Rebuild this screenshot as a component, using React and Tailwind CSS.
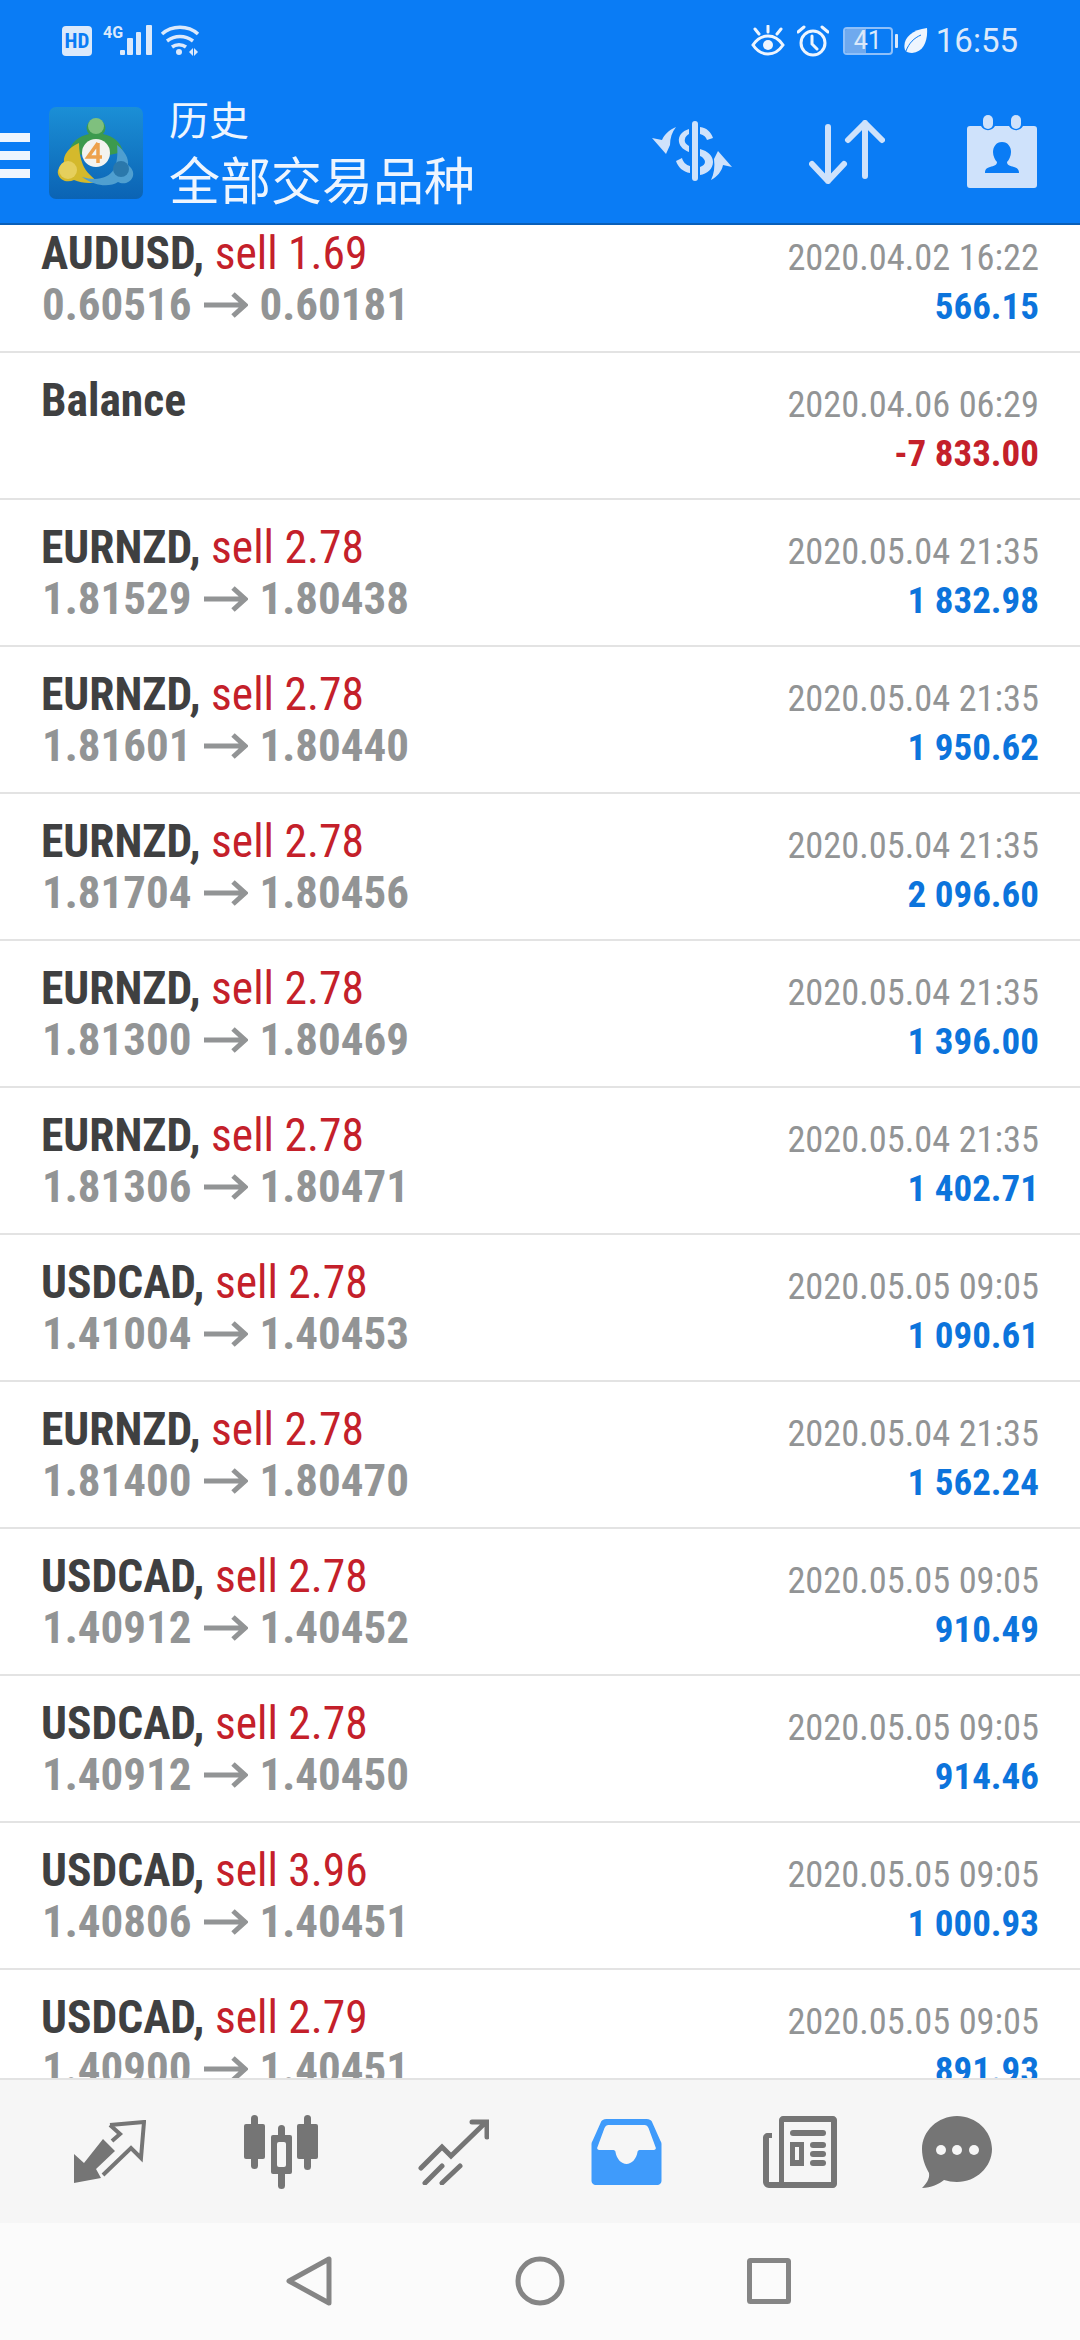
const rows = [
  { sym: "AUDUSD", lots: "sell 1.69", from: "0.60516", to: "0.60181", date: "2020.04.02 16:22", profit: "566.15" },
  { sym: "Balance", date: "2020.04.06 06:29", profit: "-7 833.00", loss: true },
  { sym: "EURNZD", lots: "sell 2.78", from: "1.81529", to: "1.80438", date: "2020.05.04 21:35", profit: "1 832.98" },
  { sym: "EURNZD", lots: "sell 2.78", from: "1.81601", to: "1.80440", date: "2020.05.04 21:35", profit: "1 950.62" },
  { sym: "EURNZD", lots: "sell 2.78", from: "1.81704", to: "1.80456", date: "2020.05.04 21:35", profit: "2 096.60" },
  { sym: "EURNZD", lots: "sell 2.78", from: "1.81300", to: "1.80469", date: "2020.05.04 21:35", profit: "1 396.00" },
  { sym: "EURNZD", lots: "sell 2.78", from: "1.81306", to: "1.80471", date: "2020.05.04 21:35", profit: "1 402.71" },
  { sym: "USDCAD", lots: "sell 2.78", from: "1.41004", to: "1.40453", date: "2020.05.05 09:05", profit: "1 090.61" },
  { sym: "EURNZD", lots: "sell 2.78", from: "1.81400", to: "1.80470", date: "2020.05.04 21:35", profit: "1 562.24" },
  { sym: "USDCAD", lots: "sell 2.78", from: "1.40912", to: "1.40452", date: "2020.05.05 09:05", profit: "910.49" },
  { sym: "USDCAD", lots: "sell 2.78", from: "1.40912", to: "1.40450", date: "2020.05.05 09:05", profit: "914.46" },
  { sym: "USDCAD", lots: "sell 3.96", from: "1.40806", to: "1.40451", date: "2020.05.05 09:05", profit: "1 000.93" },
  { sym: "USDCAD", lots: "sell 2.79", from: "1.40900", to: "1.40451", date: "2020.05.05 09:05", profit: "891.93" },
];

const Row = ({ row }) => (
  <div className="h-[147px] shrink-0 flex justify-between border-b-2 border-[#e3e3e3] pl-[41px] pr-[41px] font-[Roboto,sans-serif] [font-stretch:75%]">
    <div>
      <div className="h-[52px] mt-[22px] text-[45.5px] leading-[52px] whitespace-nowrap text-[#3f4041] font-bold">
        {row.sym}
        {row.lots && <span>, </span>}
        {row.lots && <span className="font-normal text-[#c4202a]">{row.lots}</span>}
      </div>
      {row.from && (
        <div className="flex items-center h-[50px] pl-[1px] text-[45px] leading-[50px] font-bold text-[#929495]">
          <span>{row.from}</span>
          <svg width="44" height="26" viewBox="0 0 44 26" className="mx-[12px]" fill="none" stroke="#929495" strokeWidth="5">
            <path d="M0 13h41M29 2l12 11-12 11" />
          </svg>
          <span>{row.to}</span>
        </div>
      )}
    </div>
    <div className="flex flex-col items-end">
      <div className="mt-[33px] h-[38px] text-[36.4px] leading-[38px] text-[#929495]">{row.date}</div>
      <div className={`mt-[11px] h-[38px] text-[37px] leading-[38px] font-bold ${row.loss ? "text-[#c4202a]" : "text-[#0c74dc]"}`}>
        {row.profit}
      </div>
    </div>
  </div>
);

const Logo = () => (
  <svg width="94" height="92" viewBox="0 0 94 92" className="shrink-0">
    <defs>
      <linearGradient id="lg" x1="0" y1="0" x2="0" y2="1">
        <stop offset="0" stopColor="#1b8fd6" />
        <stop offset="1" stopColor="#0b63b4" />
      </linearGradient>
    </defs>
    <rect width="94" height="92" rx="7" fill="url(#lg)" />
    <path d="M47 12a9 9 0 0 1 7 15c10 2 18 8 20 18l-27 6-27-6c2-10 10-16 20-18a9 9 0 0 1 7-15z" fill="#3c9a4e" />
    <circle cx="47" cy="19" r="8" fill="#7fc07e" />
    <path d="M30 36c-10 4-16 12-15 19-4 3-7 8-6 12 2 7 10 9 16 6 7 3 16 4 24 2-6-5-12-10-15-17-3-7-4-15-4-22z" fill="#d4b92c" />
    <circle cx="19" cy="63" r="9" fill="#e6cf5c" />
    <path d="M68 38c8 6 12 14 11 20 4 3 6 7 5 11-2 7-10 9-15 6-8 5-22 5-36-5 14 4 26 2 32-8 3-6 4-15 3-24z" fill="#4f9fd0" />
    <circle cx="72" cy="62" r="8" fill="#2b78ab" />
    <circle cx="47" cy="46" r="14" fill="#f3f3f0" />
    <path d="M49 36l-10 14h14M49 36v20" fill="none" stroke="#eda14c" strokeWidth="3.5" />
  </svg>
);

const Exchange = () => (
  <svg width="80" height="61" viewBox="0 0 80 61" fill="#cfe2fb">
    <rect x="40" y="0" width="6" height="60" rx="3" />
    <path d="M48 6c7 1 11 5 13 11l-6 2c-1-3-3-5-7-6z" />
    <path d="M37 8c-7 2-11 7-10 13 1 5 5 8 10 10v-6c-3-2-5-4-4-7 0-2 2-4 4-5z" />
    <path d="M24 40l6-3c1 4 4 7 8 8v7c-7-1-12-6-14-12z" />
    <path fillRule="evenodd" d="M48 28c8 2 13 7 13 13 0 7-6 12-13 13zm0 7v11c3-1 5-3 5-5s-2-5-5-6z" />
    <path d="M24 6C17 9 12 14 10 19L0 17 14 33 18 24C18 17 20 11 24 6z" />
    <path d="M59 59C65 56 70 50 71 44L80 46 66 30 62 38C63 46 62 53 59 59z" />
  </svg>
);

const SortArrows = () => (
  <svg width="76" height="64" viewBox="0 0 76 64" fill="none" stroke="#cfe2fb" strokeWidth="6" strokeLinecap="round" strokeLinejoin="round">
    <path d="M19 7v54M3 44l16 17 16-17M56 3v53M39 20L56 3l17 17" />
  </svg>
);

const Contact = () => (
  <svg width="70" height="73" viewBox="0 0 70 73" fill="#cfe2fb">
    <path d="M3 11h11a8 8 0 0 0 14 0h14a8 8 0 0 0 14 0h11a3 3 0 0 1 3 3v56a3 3 0 0 1-3 3H3a3 3 0 0 1-3-3V14a3 3 0 0 1 3-3z" />
    <rect x="16" y="0" width="10" height="14" rx="5" />
    <rect x="44" y="0" width="10" height="14" rx="5" />
    <path fill="#0a7cf5" d="M35 27c6 0 9 5 9 10 0 4-2 8-4 10 0 3 3 4 7 5 4 1 5 3 5 6H18c0-3 1-5 5-6 4-1 7-2 7-5-2-2-4-6-4-10 0-5 3-10 9-10z" />
  </svg>
);

const StatusLeft = () => (
  <div className="flex items-start">
    <div className="mt-[1px] w-[30px] h-[30px] rounded-[4px] bg-[#dbe9fb] text-[#0a7cf5] text-[21px] font-bold leading-[30px] text-center font-[Roboto,sans-serif] [font-stretch:75%]">HD</div>
    <svg width="100" height="32" viewBox="0 0 100 32" className="ml-[11px]" fill="#dbe9fb">
      <text x="0" y="13" fontSize="16" fontWeight="700" fontFamily="Roboto, sans-serif">4G</text>
      <rect x="17" y="25" width="5" height="5" rx="1" />
      <rect x="24" y="13" width="6" height="17" rx="1" />
      <rect x="33" y="7" width="5" height="23" rx="1" />
      <rect x="43" y="0" width="6" height="30" rx="1" />
      <g fill="none" stroke="#dbe9fb" strokeWidth="3.5">
        <path d="M59 9c10-9 26-9 36 0M64 16c8-6 18-6 26 0M69 22c4-3 10-3 14 0" />
      </g>
      <circle cx="76" cy="27" r="3" />
      <path d="M86 27l4-4v8zM91 23l4 4-4 4z" />
    </svg>
  </div>
);

const StatusRight = () => (
  <div className="flex items-center font-[Roboto,sans-serif] text-[#dbe9fb]">
    <svg width="34" height="32" viewBox="0 0 34 32" fill="none" stroke="#eef5fe" strokeWidth="3" strokeLinecap="round">
      <path d="M2 20c8-12 22-12 30 0-8 12-22 12-30 0zM17 1v6M4 4l4 5M30 4l-4 5" />
      <circle cx="17" cy="20" r="5" fill="#eef5fe" stroke="none" />
    </svg>
    <svg width="32" height="32" viewBox="0 0 32 32" className="ml-[12px]" fill="none" stroke="#eef5fe" strokeWidth="3" strokeLinecap="round">
      <circle cx="16" cy="18" r="12" />
      <path d="M15 11v8l5 5M1 7l6-5M31 7l-6-5" />
    </svg>
    <div className="ml-[14px] relative w-[50px] h-[28px] border-2 border-[#8fc0f9] rounded-[4px] overflow-hidden text-[25px] leading-[24px] text-center">
      <div className="absolute left-0 top-0 bottom-0 w-[21px] bg-[#6fa9ee]" />
      <span className="relative">41</span>
    </div>
    <div className="ml-[2px] w-[3px] h-[14px] bg-[#dbe9fb] rounded-[1px]" />
    <svg width="24" height="26" viewBox="0 0 24 26" className="ml-[6px]" fill="#eef5fe">
      <path d="M23 0c1 12-3 24-15 25-3 0-6-1-7-3C-2 12 6 2 23 0z" />
      <path d="M2 23C5 15 10 10 17 7" fill="none" stroke="#0a7cf5" strokeWidth="1" />
    </svg>
    <div className="ml-[8px] text-[33px] leading-[32px]">16:55</div>
  </div>
);

const BottomIcons = () => (
  <div className="h-[145px] bg-[#f6f6f6] border-t-2 border-[#e3e3e3] shrink-0 flex items-center pl-[74px]">
    <svg width="72" height="64" viewBox="0 0 72 64" fill="#757575">
      <path d="M0 63V34l10 9 19-24 12 12-19 18 5 9z" />
      <path fill="none" stroke="#757575" strokeWidth="4" d="M36 5l34-3-3 36-10-10-28 27M36 5l10 9-8 7" />
    </svg>
    <svg width="74" height="74" viewBox="0 0 74 74" className="ml-[98px]" fill="#757575">
      <rect x="7" y="0" width="7" height="54" rx="3.5" />
      <rect x="0" y="9" width="21" height="35" rx="2" />
      <rect x="60" y="0" width="7" height="55" rx="3.5" />
      <rect x="53" y="9" width="21" height="35" rx="2" />
      <rect x="34" y="10" width="7" height="64" rx="3.5" />
      <rect x="27" y="20" width="21" height="39" rx="2" />
      <rect x="33" y="27" width="9" height="25" rx="2" fill="#f6f6f6" />
    </svg>
    <svg width="71" height="66" viewBox="0 0 71 66" className="ml-[100px]" fill="none" stroke="#757575" strokeWidth="5" strokeLinecap="round">
      <path d="M3 49l21-21 9 9 34-33M54 3h15v15M7 64l17-17M24 64l18-17" />
    </svg>
    <svg width="71" height="66" viewBox="0 0 70 66" className="ml-[102px]" fill="#3f9bfb">
      <path fillRule="evenodd" d="M15 0h40c3 0 5 1 6 4l8 18c1 1 1 3 1 4v36c0 2-2 4-4 4H4c-2 0-4-2-4-4V26c0-1 0-3 1-4L9 4c1-3 3-4 6-4zm2 6c-2 0-3 1-4 3l-7 19c-1 1 0 3 2 3h14c1 0 2 1 2 2 1 7 6 12 11 12s10-5 11-12c0-1 1-2 2-2h14c2 0 3-2 2-3l-7-19c-1-2-2-3-4-3z" />
    </svg>
    <svg width="74" height="72" viewBox="0 0 74 72" className="ml-[101px]" fill="#757575">
      <path fillRule="evenodd" d="M16 4c0-2 2-4 4-4h50c2 0 4 2 4 4v64c0 2-2 4-4 4H6c-3 0-6-3-6-6V22c0-3 2-5 5-5h4v5H6v44h10zm5 2v60h47V6z" />
      <rect x="27" y="14" width="36" height="6" rx="3" />
      <path fillRule="evenodd" d="M27 26h14v24H27zm5 5v13h4V31z" />
      <rect x="47" y="26" width="16" height="6" rx="3" />
      <rect x="47" y="35" width="16" height="6" rx="3" />
      <rect x="47" y="44" width="16" height="6" rx="3" />
    </svg>
    <svg width="72" height="72" viewBox="0 0 70 72" className="ml-[84px]" fill="#757575">
      <path d="M35 0c19 0 35 15 35 33S54 66 35 66c-5 0-9-1-13-2-5 4-13 8-22 8 4-4 8-9 7-15C3 50 0 42 0 33 0 15 16 0 35 0z" />
      <circle cx="19" cy="34" r="5" fill="#f6f6f6" />
      <circle cx="35" cy="34" r="5" fill="#f6f6f6" />
      <circle cx="52" cy="34" r="5" fill="#f6f6f6" />
    </svg>
  </div>
);

const NavBar = () => (
  <div className="h-[117px] bg-[#fbfbfb] shrink-0 flex items-center pl-[286px] pb-[1px]">
    <svg width="46" height="50" viewBox="0 0 46 50" fill="none" stroke="#858585" strokeWidth="5" strokeLinejoin="round">
      <path d="M43 3v44L3 25z" />
    </svg>
    <svg width="50" height="50" viewBox="0 0 50 50" className="ml-[183px]" fill="none" stroke="#858585" strokeWidth="5">
      <circle cx="25" cy="25" r="22" />
    </svg>
    <svg width="44" height="46" viewBox="0 0 44 46" className="ml-[182px]" fill="none" stroke="#858585" strokeWidth="5" strokeLinejoin="round">
      <rect x="2.5" y="2.5" width="39" height="41" rx="1" />
    </svg>
  </div>
);

export default function App() {
  return (
    <div className="w-[1080px] h-[2340px] flex flex-col overflow-hidden bg-white">
      <div className="h-[225px] shrink-0 bg-[#0a7cf5] border-b-[2px] border-[#0a5fb8] flex flex-col">
        <div className="h-[84px] flex justify-between items-start pl-[62px] pr-[62px] pt-[25px]">
          <StatusLeft />
          <StatusRight />
        </div>
        <div className="flex items-start pt-[22px]">
          <div className="w-[30px] mt-[27px] flex flex-col gap-[9px]">
            <div className="h-[9px] bg-[#eef5fe]" />
            <div className="h-[9px] bg-[#eef5fe]" />
            <div className="h-[9px] bg-[#eef5fe]" />
          </div>
          <div className="ml-[19px] mt-[1px]"><Logo /></div>
          <div className="ml-[26px] -mt-[10px] font-['Noto_Sans_CJK_SC',sans-serif] text-[#eef5fe]">
            <div className="text-[40px] leading-[44px]">历史</div>
            <div className="mt-[8px] text-[51px] leading-[60px]">全部交易品种</div>
          </div>
          <div className="ml-auto flex items-center h-[73px] mt-[9px] mr-[43px]">
            <Exchange />
            <div className="ml-[77px]"><SortArrows /></div>
            <div className="ml-[82px]"><Contact /></div>
          </div>
        </div>
      </div>
      <div className="flex-1 min-h-0 overflow-hidden">
        <div className="-mt-[19px]">
          {rows.map((row, i) => (
            <Row key={i} row={row} />
          ))}
        </div>
      </div>
      <BottomIcons />
      <NavBar />
    </div>
  );
}
